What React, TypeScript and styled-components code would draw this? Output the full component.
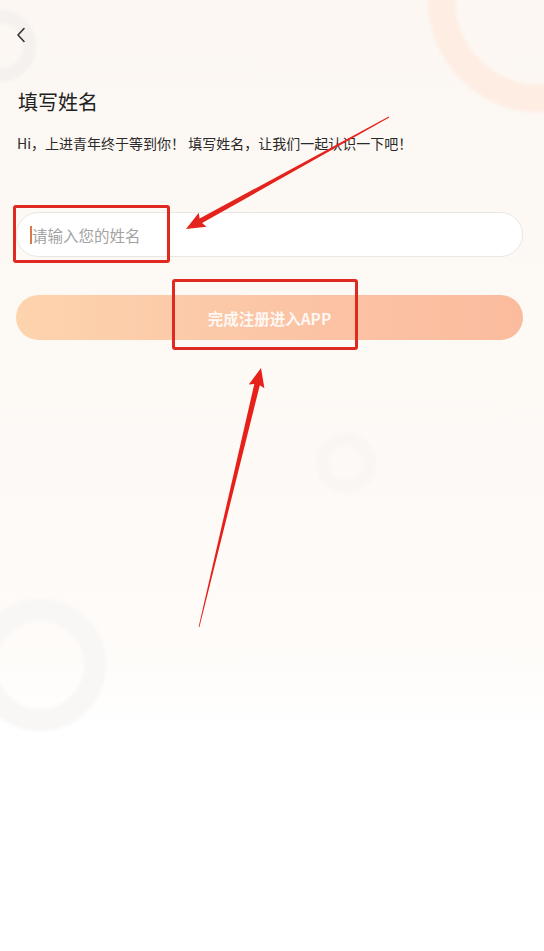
import React from 'react';
import styled, { createGlobalStyle } from 'styled-components';

const GlobalStyle = createGlobalStyle`
  html, body {
    margin: 0;
    padding: 0;
    background: #ffffff;
  }
  * {
    box-sizing: border-box;
  }
`;

type Point = [number, number];

// builds a tapered red arrow (thin tail, wide shaft end, triangular head)
function arrowPoints(tail: Point, tip: Point, headLen: number, headHalf: number, tailHalf: number, shaftHalf: number) {
  const dx = tip[0] - tail[0];
  const dy = tip[1] - tail[1];
  const len = Math.hypot(dx, dy);
  const ux = dx / len;
  const uy = dy / len;
  const nx = -uy;
  const ny = ux;
  const bx = tip[0] - ux * headLen;
  const by = tip[1] - uy * headLen;
  const pts: Point[] = [
    [tail[0] + nx * tailHalf, tail[1] + ny * tailHalf],
    [bx + nx * shaftHalf, by + ny * shaftHalf],
    [bx + nx * headHalf - ux * 2, by + ny * headHalf - uy * 2],
    tip,
    [bx - nx * headHalf - ux * 2, by - ny * headHalf - uy * 2],
    [bx - nx * shaftHalf, by - ny * shaftHalf],
    [tail[0] - nx * tailHalf, tail[1] - ny * tailHalf],
  ];
  return pts.map((p) => `${p[0].toFixed(1)},${p[1].toFixed(1)}`).join(' ');
}

function BackIcon() {
  return (
    <svg width="10" height="16" viewBox="0 0 10 16">
      <polyline points="8,1.5 2,8 8,14.5" fill="none" stroke="#333" strokeWidth="1.6" strokeLinecap="round" strokeLinejoin="round" />
    </svg>
  );
}

export default function App() {
  return (
    <>
      <GlobalStyle />
      <Page>
        <Decor>
          <Ring $x={0} $y={46} $r={36} $w={13} $color="#f4f1ee" />
          <Ring $x={540} $y={0} $r={112} $w={27} $color="#feede3" />
          <Ring $x={346} $y={463} $r={30} $w={13} $color="#f9f6f3" />
          <Ring $x={40} $y={665} $r={66} $w={22} $color="#f8f7f6" />
        </Decor>

        <Content>
          <NavBar>
            <BackButton aria-label="返回">
              <BackIcon />
            </BackButton>
          </NavBar>

          <Title>填写姓名</Title>
          <Subtitle>Hi，上进青年终于等到你！ 填写姓名，让我们一起认识一下吧！</Subtitle>

          <Field>
            <Caret />
            <NameInput placeholder="请输入您的姓名" />
          </Field>

          <SubmitButton type="button">完成注册进入APP</SubmitButton>
        </Content>

        <Mark $x={13} $y={205} $w={157} $h={58} />
        <Mark $x={172} $y={279} $w={186} $h={71} />

        <Arrows width="544" height="951" viewBox="0 0 544 951">
          <polygon points={arrowPoints([389, 117], [186, 229], 17, 8, 0.4, 2.6)} fill="#e5231d" />
          <polygon points={arrowPoints([199, 627], [261, 368], 17, 8, 0.4, 2.8)} fill="#e8201a" />
        </Arrows>
      </Page>
    </>
  );
}

const Page = styled.div`
  position: relative;
  width: 544px;
  height: 951px;
  overflow: hidden;
  background: linear-gradient(
    to bottom,
    #fcf7f2 0px,
    #fdf9f5 360px,
    #fefbf8 640px,
    #ffffff 730px
  );
  font-family: 'Noto Sans CJK SC', 'Noto Sans', sans-serif;
`;

const Decor = styled.div`
  position: absolute;
  inset: 0;
  pointer-events: none;
`;

const Ring = styled.div<{ $x: number; $y: number; $r: number; $w: number; $color: string }>`
  position: absolute;
  left: ${(p) => p.$x - p.$r}px;
  top: ${(p) => p.$y - p.$r}px;
  width: ${(p) => p.$r * 2}px;
  height: ${(p) => p.$r * 2}px;
  border-radius: 50%;
  border: ${(p) => p.$w}px solid ${(p) => p.$color};
  filter: blur(1.5px);
`;

const Content = styled.div`
  position: relative;
  display: flex;
  flex-direction: column;
  padding: 0 21px 0 16px;
`;

const NavBar = styled.div`
  height: 70px;
  display: flex;
  align-items: center;
`;

const BackButton = styled.button`
  display: flex;
  align-items: center;
  justify-content: center;
  padding: 0;
  border: none;
  background: none;
`;

const Title = styled.h1`
  margin: 18px 0 0 2px;
  font-size: 20px;
  line-height: 28px;
  font-weight: 400;
  color: #222;
`;

const Subtitle = styled.p`
  margin: 17px 0 0 1px;
  font-size: 14px;
  line-height: 20px;
  color: #2a2a2a;
  white-space: nowrap;
`;

const Field = styled.div`
  position: relative;
  margin-top: 59px;
  height: 45px;
  width: 507px;
`;

const NameInput = styled.input`
  width: 100%;
  height: 100%;
  padding: 0 15px;
  border: 1px solid #ece6e1;
  border-radius: 23px;
  background: #ffffff;
  font-family: inherit;
  font-size: 15.5px;
  color: #333;
  outline: none;

  &::placeholder {
    color: #a3a3a3;
  }
`;

const Caret = styled.span`
  position: absolute;
  left: 14px;
  top: 14px;
  width: 1.5px;
  height: 18px;
  background: #d9784a;
  z-index: 1;
`;

const SubmitButton = styled.button`
  margin-top: 38px;
  width: 507px;
  height: 45px;
  border: none;
  border-radius: 23px;
  background: linear-gradient(to right, #fdd4ae, #fbc3a4 60%, #fbbc9e);
  font-family: inherit;
  font-size: 15.5px;
  font-weight: 700;
  color: rgba(255, 255, 255, 0.88);
`;

const Mark = styled.div<{ $x: number; $y: number; $w: number; $h: number }>`
  position: absolute;
  left: ${(p) => p.$x}px;
  top: ${(p) => p.$y}px;
  width: ${(p) => p.$w}px;
  height: ${(p) => p.$h}px;
  border: 3px solid #df2a22;
  border-radius: 3px;
  pointer-events: none;
`;

const Arrows = styled.svg`
  position: absolute;
  left: 0;
  top: 0;
  pointer-events: none;
`;
